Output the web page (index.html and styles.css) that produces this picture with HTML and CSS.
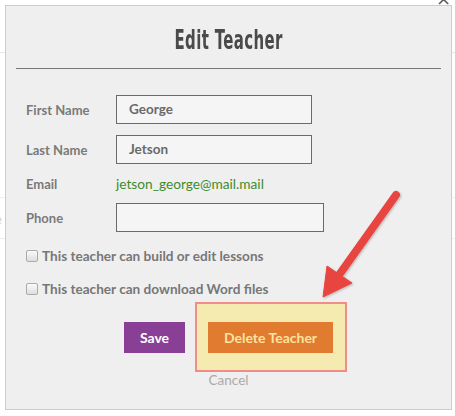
FILE: index.html
```html
<!DOCTYPE html>
<html>
<head>
<meta charset="utf-8">
<link rel="stylesheet" href="styles.css">
</head>
<body>
<div class="page">
  <div class="page-bar"></div>
  <div class="page-row"><span class="page-text">e</span></div>
</div>
<span class="close-x">×</span>
<div class="modal">
  <div class="title-wrap"><h1 class="title">Edit Teacher</h1></div>
  <hr class="rule">
  <form class="form">
    <div class="row row-first">
      <label class="label">First Name</label>
      <div class="input">George</div>
    </div>
    <div class="row">
      <label class="label">Last Name</label>
      <div class="input">Jetson</div>
    </div>
    <div class="row row-email">
      <label class="label">Email</label>
      <span class="email">jetson_george@mail.mail</span>
    </div>
    <div class="row">
      <label class="label">Phone</label>
      <div class="input input-wide"></div>
    </div>
    <div class="check check-first"><span class="box"></span><span>This teacher can build or edit lessons</span></div>
    <div class="check"><span class="box"></span><span>This teacher can download Word files</span></div>
    <div class="actions">
      <span class="btn btn-save">Save</span>
      <span class="highlight"><span class="btn btn-delete">Delete Teacher</span></span>
    </div>
    <div class="cancel">Cancel</div>
  </form>
</div>
<svg class="arrow" width="455" height="416" viewBox="0 0 455 416">
  <defs>
    <filter id="sh" x="-20%" y="-20%" width="140%" height="140%">
      <feDropShadow dx="1" dy="1" stdDeviation="1" flood-color="#000" flood-opacity="0.25"/>
    </filter>
  </defs>
  <g filter="url(#sh)" fill="#e8453f" stroke="#e8453f">
    <line x1="396" y1="195" x2="339" y2="275" stroke-width="8" stroke-linecap="round"/>
    <polygon points="323,297 327,266 352,283" stroke-width="1" stroke-linejoin="round"/>
  </g>
</svg>
</body>
</html>
```
FILE: styles.css
```css
html, body {
  margin: 0;
  padding: 0;
  background: #ffffff;
  width: 455px;
  height: 416px;
  overflow: hidden;
  font-family: Lato, "Open Sans", sans-serif;
}
.page {
  padding-top: 52px;
}
.page-bar {
  height: 0;
  border-top: 1px solid #e6e6e6;
}
.page-row {
  margin-top: 144px;
  height: 40px;
  border-top: 1px solid #eeeeee;
  border-bottom: 1px solid #eeeeee;
}
.page-text {
  color: #cfcfcf;
  font-size: 13px;
  position: relative;
  left: -5px;
  top: 10px;
}
.close-x {
  position: absolute;
  left: 436px;
  top: -12px;
  font-size: 18px;
  color: #555;
  font-family: "DejaVu Sans", sans-serif;
}
.modal {
  position: absolute;
  left: 5px;
  top: 5px;
  height: 403px;
  width: 425px;
  background: #efefef;
  border: 1px solid #cccccc;
  padding: 0 10px;
}
.title-wrap {
  padding-top: 19px;
  height: 43px;
  text-align: center;
}
.title {
  display: inline-block;
  margin: 0;
  font-family: "DejaVu Sans Condensed", "DejaVu Sans", sans-serif;
  font-stretch: condensed;
  font-weight: 700;
  font-size: 26px;
  color: #4a4a4a;
  line-height: 30px;
  transform: scaleX(0.64);
  letter-spacing: 0.6px;
}
.rule {
  margin: 0;
  border: 0;
  border-top: 1px solid #777777;
  height: 0;
}
.form {
  padding: 26px 0 0 10px;
  display: flex;
  flex-direction: column;
}
.row {
  display: flex;
  align-items: center;
  margin-top: 11px;
}
.row-first {
  margin-top: 0;
}
.label {
  width: 90px;
  font-size: 13px;
  font-weight: 700;
  color: #7a7a7a;
}
.input {
  width: 170px;
  height: 27px;
  border: 1px solid #6a6a6a;
  background: #f5f5f5;
  padding: 0 12px;
  font-size: 13.5px;
  font-weight: 700;
  color: #6a6a6a;
  line-height: 27px;
}
.input-wide {
  width: 182px;
}
.row-email {
  height: 17px;
}
.email {
  font-size: 13.7px;
  color: #3d8c2c;
}
.check {
  display: flex;
  align-items: center;
  gap: 4px;
  font-size: 13.6px;
  font-weight: 700;
  color: #777;
  height: 16px;
  margin-top: 17px;
}
.check-first {
  margin-top: 16px;
}
.box {
  width: 10px;
  height: 10px;
  border: 1px solid #aaa;
  border-radius: 2px;
  background: linear-gradient(#fafafa, #dedede);
}
.actions {
  display: flex;
  justify-content: center;
  gap: 23px;
  margin-top: 25px;
  margin-left: -10px;
}
.btn {
  display: inline-block;
  height: 31px;
  line-height: 31px;
  font-size: 14px;
  font-weight: 700;
  text-align: center;
}
.btn-save {
  width: 61px;
  background: #8a3f97;
  color: #ffffff;
}
.highlight {
  position: relative;
  display: inline-block;
}
.highlight::before {
  content: "";
  position: absolute;
  left: -13px;
  right: -14px;
  top: -20px;
  bottom: -19px;
  background: #f5ebb0;
  border: 2px solid #f08c8a;
  box-sizing: border-box;
}
.btn-delete {
  position: relative;
  width: 125px;
  background: #e07b30;
  color: #fbe3a0;
}
.cancel {
  margin-left: -10px;
  text-align: center;
  margin-top: 19px;
  font-size: 13.5px;
  color: #aaaaaa;
}
.arrow {
  position: absolute;
  left: 0;
  top: 0;
  pointer-events: none;
}
```
